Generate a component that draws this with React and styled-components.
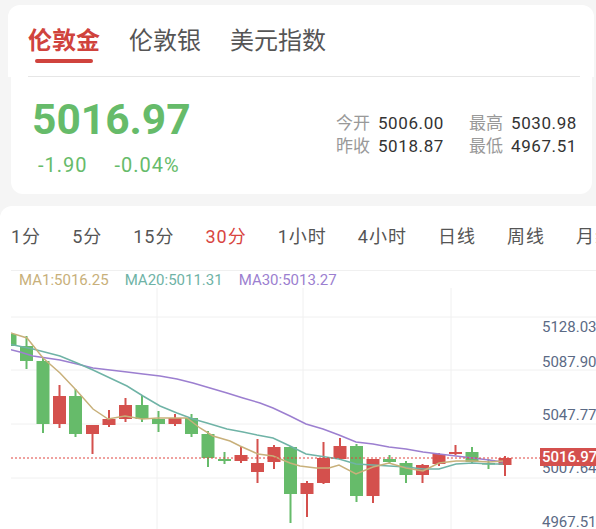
import styled, { createGlobalStyle } from 'styled-components';

const GREEN = '#66bb6a';
const RED = '#d4504d';

const GlobalStyle = createGlobalStyle`
  html, body {
    margin: 0;
    padding: 0;
    background: #f5f5f5;
    font-family: Roboto, "Noto Sans CJK SC", sans-serif;
    overflow: hidden;
  }
`;

// [center x, body top, body bottom, wick top, wick bottom, up?]
const candles = [
  [10, 333, 345, 331, 346, 0],
  [26.5, 345, 360, 335, 368, 0],
  [43, 360, 423, 357, 432, 0],
  [59.5, 395, 423, 384, 427, 1],
  [75.5, 395, 433, 388, 436, 0],
  [92.5, 424, 433, 424, 453, 1],
  [109, 418, 424, 409, 426, 1],
  [125.5, 404, 418, 397, 421, 1],
  [142, 404, 418, 394, 421, 0],
  [158.5, 418, 423, 410, 431, 0],
  [175, 417, 423, 413, 425, 1],
  [191.5, 417, 433, 413, 436, 0],
  [208, 433, 457, 430, 466, 0],
  [224.5, 458, 460, 451, 463, 0],
  [241, 454, 460, 445, 462, 1],
  [257.5, 462, 471, 438, 482, 1],
  [274, 446, 461, 444, 468, 1],
  [290.5, 446, 493, 445, 522, 0],
  [307, 482, 493, 480, 516, 1],
  [323.5, 457, 482, 441, 483, 1],
  [340, 445, 458, 437, 458, 1],
  [356.5, 445, 495, 443, 501, 0],
  [373, 458, 495, 458, 502, 1],
  [389.5, 458, 461, 454, 463, 0],
  [406, 462, 474, 460, 482, 0],
  [422.5, 464, 474, 463, 482, 1],
  [439, 453, 463, 452, 465, 1],
  [455.5, 451, 453, 444, 454, 1],
  [472, 451, 461, 446, 462, 0],
  [488.5, 462, 463, 458, 468, 0],
  [505, 457, 464, 455, 475, 1]
];

const ma1 = '8,331 27,337 43,357 60,372 77,390 93,408 108,418 125,415 142,418 158,417 175,417 187,417 200,427 213,435 230,440 240,445 258,453 273,455 290,462 300,465 316,467 329,467 339,464 356,473 373,466 389,462 406,467 423,470 439,462 456,460 473,460 489,461 503,460';
const ma20 = '8,343 33,348 60,355 77,362 93,369 110,377 127,385 143,395 160,405 177,412 193,418 207,422 227,428 243,431 257,434 273,437 290,445 300,450 306,453 339,458 356,463 373,464 406,466 423,468 439,468 456,463 473,462 489,463 503,463';
const ma30 = '8,348 20,351 33,355 60,359 77,363 93,367 110,369 127,371 143,373 160,375 177,378 193,382 210,387 227,392 243,397 260,402 273,407 290,415 300,420 306,423 323,428 339,434 356,441 373,443 389,446 406,448 423,451 439,453 456,455 473,457 489,459 503,461';

const axisLabels = [
  ['5128.03', 331],
  ['5087.90', 366],
  ['5047.77', 419],
  ['5007.64', 472],
  ['4967.51', 526]
];

const periods = ['1分', '5分', '15分', '30分', '1小时', '4小时', '日线', '周线', '月线'];

const App = () => {
  return (
    <Page>
      <GlobalStyle />
      <TabCard>
        <TabRow>
          <Tab $active>
            伦敦金
            <Underline />
          </Tab>
          <Tab>伦敦银</Tab>
          <Tab>美元指数</Tab>
        </TabRow>
        <Divider />
      </TabCard>

      <QuoteCard>
        <div>
          <Price>5016.97</Price>
          <ChangeRow>
            <span>-1.90</span>
            <span>-0.04%</span>
          </ChangeRow>
        </div>
        <Stats>
          <Stat>
            <label>今开</label>
            <span>5006.00</span>
          </Stat>
          <Stat>
            <label>最高</label>
            <span>5030.98</span>
          </Stat>
          <Stat>
            <label>昨收</label>
            <span>5018.87</span>
          </Stat>
          <Stat>
            <label>最低</label>
            <span>4967.51</span>
          </Stat>
        </Stats>
      </QuoteCard>

      <ChartPanel>
        <PeriodRow>
          {periods.map((p) => (
            <Period key={p} $active={p === '30分'}>
              {p}
            </Period>
          ))}
        </PeriodRow>
        <Separator />
        <MARow>
          <MALabel $color="#c8b07a">MA1:5016.25</MALabel>
          <MALabel $color="#6fb3a6">MA20:5011.31</MALabel>
          <MALabel $color="#9c7fd0">MA30:5013.27</MALabel>
        </MARow>
        <ChartSvg viewBox="0 287 596 242" width="596" height="242">
          <defs>
            <clipPath id="plot">
              <rect x="11" y="287" width="585" height="242" />
            </clipPath>
          </defs>
          {[316, 369, 423, 477].map((y) => (
            <line key={y} x1="11" x2="596" y1={y} y2={y} stroke="#f0f0f0" strokeWidth="1" />
          ))}
          {[157, 303, 451].map((x) => (
            <line key={x} x1={x} x2={x} y1="287" y2="529" stroke="#f0f0f0" strokeWidth="1" />
          ))}
          <g clipPath="url(#plot)">
            {candles.map(([cx, bt, bb, wt, wb, up], i) => {
              const color = up ? RED : GREEN;
              return (
                <g key={i}>
                  <rect x={cx - 1} y={wt} width="2" height={wb - wt} fill={color} />
                  <rect x={cx - 6.5} y={bt} width="13" height={Math.max(bb - bt, 1.5)} fill={color} />
                </g>
              );
            })}
            <polyline points={ma30} fill="none" stroke="#9c7fd0" strokeWidth="1.5" />
            <polyline points={ma20} fill="none" stroke="#6fb3a6" strokeWidth="1.5" />
            <polyline points={ma1} fill="none" stroke="#c8b07a" strokeWidth="1.5" />
          </g>
          <line x1="11" x2="540" y1="457" y2="457" stroke="#e0453f" strokeWidth="1" strokeDasharray="2 2" />
          {axisLabels.map(([t, y]) => (
            <AxisText key={t} x="542" y={y}>
              {t}
            </AxisText>
          ))}
          <rect x="540" y="447" width="60" height="18" fill={RED} />
          <AxisText x="542" y="461" fill="#fff" fontWeight="500">
            5016.97
          </AxisText>
        </ChartSvg>
      </ChartPanel>
    </Page>
  );
};

export default App;

const Page = styled.div`
  width: 596px;
  height: 529px;
  overflow: hidden;
`;

const TabCard = styled.div`
  margin: 5px 2px 0 8px;
  padding: 20px 14px 0 20px;
  background: #fff;
  border-radius: 12px 12px 0 0;
`;

const TabRow = styled.div`
  display: flex;
  align-items: flex-start;
  gap: 29px;
`;

const Tab = styled.div`
  display: flex;
  flex-direction: column;
  align-items: center;
  font-size: 24px;
  line-height: 32px;
  color: ${(p) => (p.$active ? '#d0433d' : '#555')};
  font-weight: ${(p) => (p.$active ? 700 : 400)};
`;

const Underline = styled.div`
  width: 58px;
  height: 4px;
  margin-top: 2px;
  border-radius: 2px;
  background: #d0433d;
`;

const Divider = styled.div`
  margin-top: 13px;
  height: 1px;
  background: #e6e6e6;
`;

const QuoteCard = styled.div`
  box-sizing: border-box;
  height: 117px;
  margin: 0 4px 0 11px;
  padding: 21px 15px 0 21px;
  display: flex;
  justify-content: space-between;
  align-items: flex-start;
  background: #fff;
  border-radius: 0 0 12px 12px;
`;

const Price = styled.div`
  font-size: 42.5px;
  line-height: 44px;
  font-weight: 700;
  color: ${GREEN};
`;

const ChangeRow = styled.div`
  display: flex;
  gap: 27px;
  margin-top: 13px;
  padding-left: 6px;
  font-size: 20px;
  line-height: 20px;
  letter-spacing: 1px;
  color: ${GREEN};
`;

const Stats = styled.div`
  display: grid;
  grid-template-columns: auto auto;
  column-gap: 25px;
  margin-top: 14px;
  line-height: 23px;
`;

const Stat = styled.div`
  display: flex;
  align-items: baseline;
  label {
    font-size: 17px;
    color: #999;
    margin-right: 8px;
  }
  span {
    font-size: 17px;
    color: #333;
    letter-spacing: 0.6px;
  }
`;

const ChartPanel = styled.div`
  margin-top: 12px;
  background: #fff;
  border-radius: 12px 0 0 0;
  height: 330px;
`;

const PeriodRow = styled.div`
  display: flex;
  gap: 31px;
  padding: 19px 0 0 11px;
  font-size: 18px;
  line-height: 24px;
  letter-spacing: 1px;
  white-space: nowrap;
  overflow: hidden;
`;

const Period = styled.div`
  flex-shrink: 0;
  color: ${(p) => (p.$active ? '#d8453f' : '#555')};
`;

const Separator = styled.div`
  margin: 21px 0 0 11px;
  height: 1px;
  background: #f0f0f0;
`;

const MARow = styled.div`
  display: flex;
  gap: 16px;
  padding: 1px 0 0 19px;
  font-size: 15px;
  line-height: 16px;
`;

const MALabel = styled.span`
  color: ${(p) => p.$color};
`;

const ChartSvg = styled.svg`
  display: block;
`;

const AxisText = styled.text`
  font-family: Roboto, sans-serif;
  font-size: 15px;
  fill: ${(p) => p.fill || '#5b6a85'};
`;
